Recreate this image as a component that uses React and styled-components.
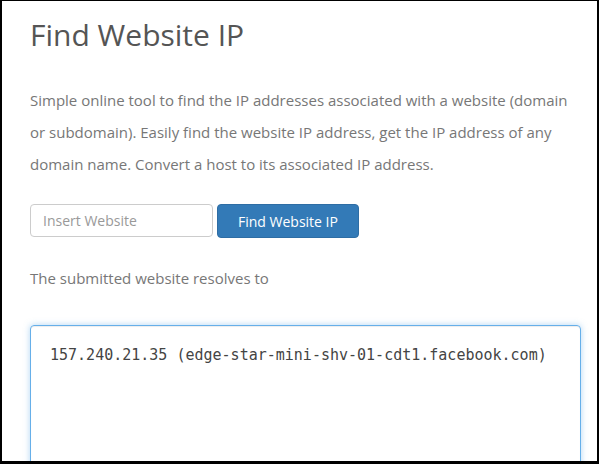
import React from 'react';
import styled, { createGlobalStyle } from 'styled-components';

const GlobalStyle = createGlobalStyle`
  html, body {
    margin: 0;
    padding: 0;
    background: #000;
  }
  body {
    font-family: "Open Sans", "Liberation Sans", sans-serif;
  }
`;

// the screenshot has a thin black frame around it
const Frame = styled.div`
  width: 599px;
  height: 464px;
  box-sizing: border-box;
  border-style: solid;
  border-color: #000;
  border-width: 1px 2px 3px 2px;
  background: #fff;
  overflow: hidden;
`;

const Page = styled.div`
  padding: 14px 0 0 28px;
  width: 551px;
`;

const Title = styled.h1`
  margin: 0;
  font-size: 30px;
  font-weight: 400;
  line-height: 40px;
  color: #555;
`;

const Lead = styled.p`
  margin: 29px 0 0;
  font-size: 15px;
  line-height: 32px;
  color: #777;
`;

const Form = styled.form`
  display: flex;
  gap: 4px;
  margin-top: 24px;
`;

const Input = styled.input`
  width: 183px;
  height: 33px;
  box-sizing: border-box;
  padding: 0 12px;
  border: 1px solid #ccc;
  border-radius: 4px;
  font-family: inherit;
  font-size: 14px;
  color: #555;
  &::placeholder {
    color: #999;
  }
`;

const Button = styled.button`
  height: 34px;
  padding: 0 20px;
  border: 1px solid #2e6da4;
  border-radius: 4px;
  background: #337ab7;
  color: #fff;
  font-family: inherit;
  font-size: 14px;
  cursor: pointer;
`;

const Note = styled.p`
  margin: 28px 0 0;
  font-size: 15px;
  line-height: 24px;
  color: #777;
`;

const Result = styled.div`
  margin-top: 35px;
  height: 200px;
  box-sizing: border-box;
  padding: 17px 19px;
  border: 1px solid #66afe9;
  border-radius: 4px;
  box-shadow: inset 0 1px 1px rgba(0, 0, 0, .075), 0 0 6px rgba(102, 175, 233, .5);
  font-family: "DejaVu Sans Mono", "Liberation Mono", monospace;
  font-size: 15px;
  line-height: 24px;
  color: #444;
  white-space: pre;
`;

export default function App() {
  return (
    <Frame>
      <GlobalStyle />
      <Page>
        <Title>Find Website IP</Title>
        <Lead>
          Simple online tool to find the IP addresses associated with a website (domain or subdomain).
          Easily find the website IP address, get the IP address of any domain name. Convert a host to
          its associated IP address.
        </Lead>
        <Form onSubmit={e => e.preventDefault()}>
          <Input placeholder="Insert Website" />
          <Button type="submit">Find Website IP</Button>
        </Form>
        <Note>The submitted website resolves to</Note>
        <Result>157.240.21.35 (edge-star-mini-shv-01-cdt1.facebook.com)</Result>
      </Page>
    </Frame>
  );
}
